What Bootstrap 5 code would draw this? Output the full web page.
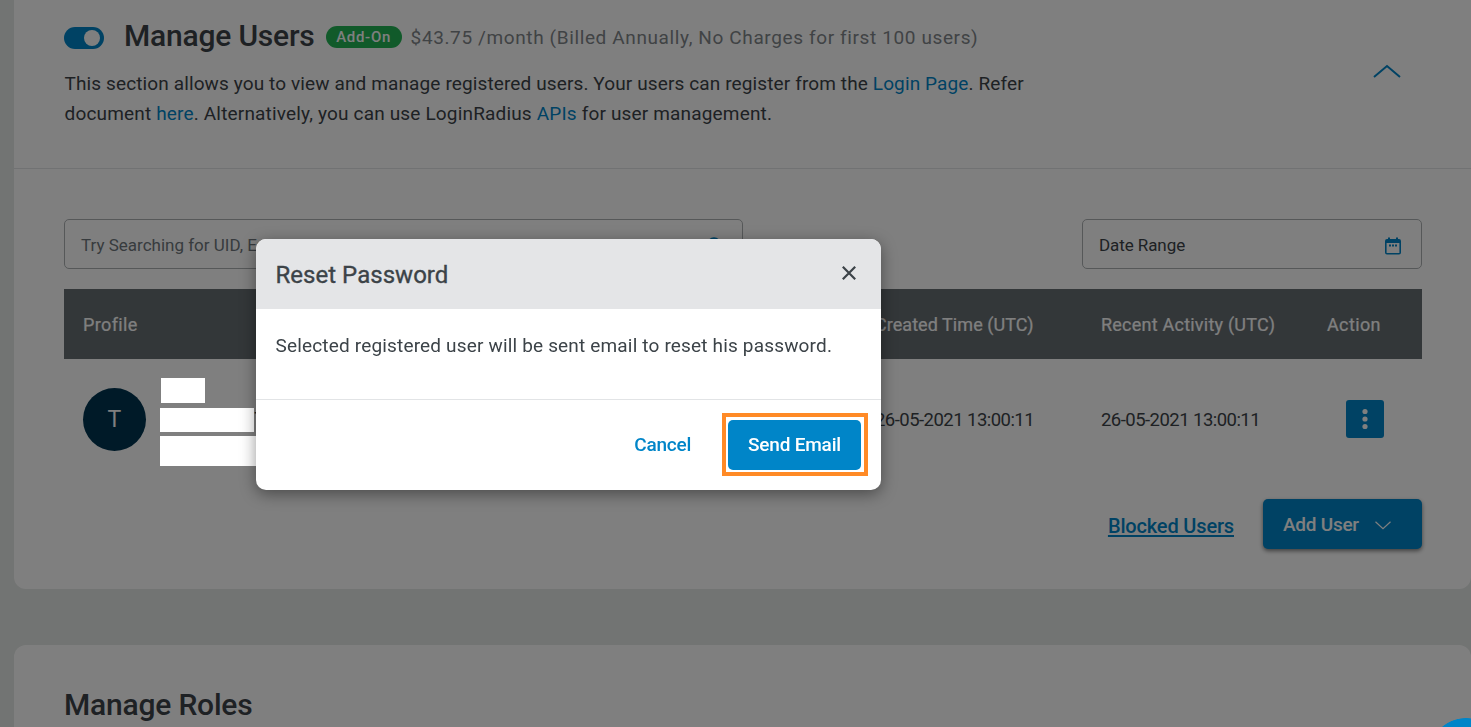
<!DOCTYPE html>
<html lang="en">
<head>
<meta charset="utf-8">
<meta name="viewport" content="width=device-width, initial-scale=1">
<title>Manage Users</title>
<link href="https://cdn.jsdelivr.net/npm/bootstrap@5.3.0/dist/css/bootstrap.min.css" rel="stylesheet">
<style>
  :root { --brand: #0085c8; --ink: #3c4348; }
  body { background: #e4e8e6; color: var(--ink); font-family: Roboto, "Liberation Sans", sans-serif; font-size: 19px; letter-spacing: .12px; height: 727px; overflow: hidden; }
  a { color: var(--brand); text-decoration: none; }
  .page { margin-left: 14px; }
  .panel { background: #fff; border-radius: 12px; }
  .panel-users { height: 589px; border-top-left-radius: 0; border-top-right-radius: 0; }
  .panel-head { height: 169px; padding: 18px 49px 0 50px; border-bottom: 1px solid #e2e4e6; }
  .panel-body { padding: 50px 49px 0 50px; }
  .panel-roles { height: 82px; margin-top: 56px; padding: 42px 50px 0; border-bottom-left-radius: 0; border-bottom-right-radius: 0; }
  .heading { font-size: 30px; line-height: 36px; font-weight: 500; letter-spacing: -.2px; margin: 0; }
  .switch { width: 40px; height: 22px; border-radius: 11px; background: var(--brand); padding: 0 4px; margin: 4px 20px 0 0; }
  .switch i { width: 16px; height: 16px; border-radius: 50%; background: #fff; }
  .addon { height: 22px; line-height: 22px; width: 76px; border-radius: 11px; background: #22b455; color: #fff; font-size: 15px; font-weight: 500; letter-spacing: .7px; margin: 1px 9px 0 11px; }
  .price { color: #81868a; letter-spacing: .62px; margin-top: 5px; }
  .intro { line-height: 30px; margin: 15px 0 0 .5px; width: 1000px; }
  .intro .second { letter-spacing: .17px; }
  .collapse-icon { margin: 46px 21px 0 0; }
  .field { height: 50px; border: 1px solid #adb1b3; border-radius: 5px; font-size: 17px; padding: 4px 20px 0 16px; letter-spacing: 0; }
  .field svg { margin-bottom: 1px; }
  .field-search { width: 679px; color: #6f777c; padding-right: 17px; }
  .field-date { width: 340px; letter-spacing: -.08px; }
  .users { margin: 20px 0 0; table-layout: fixed; width: 1358px; border-collapse: collapse; }
  .users th { height: 70px; background: #676e73; color: #fff; font-size: 18px; font-weight: 400; letter-spacing: .38px; padding: 0 0 0 19px; vertical-align: middle; -webkit-text-stroke: .2px; }
  .users th.created { letter-spacing: .05px; }
  .users th.recent { letter-spacing: .23px; }
  .users td { height: 120px; padding: 0 0 0 19px; vertical-align: middle; }
  .users td.stamp { font-size: 18.5px; letter-spacing: -.54px; padding-top: 3px; }
  .avatar { width: 63px; height: 63px; border-radius: 50%; background: #003450; color: #fff; font-size: 23px; padding-top: 2px; }
  .hidden-info { position: relative; z-index: 1051; margin-left: 14px; height: 88px; margin-top: 5px; }
  .hidden-info i { background: #fff; display: block; }
  .hidden-info .l1 { width: 44px; height: 25px; margin-left: 1px; }
  .hidden-info .l2 { width: 94px; height: 24px; margin-top: 5px; }
  .hidden-info .l3 { width: 120px; height: 30px; margin-top: 4px; }
  .tail { margin-left: -26px; line-height: 24px; }
  .dots { width: 38px; height: 38px; border-radius: 3px; background: var(--brand); margin-left: 18.500px; }
  .blocked { font-size: 20px; font-weight: 500; letter-spacing: -.16px; text-decoration: underline; text-underline-offset: 2px; text-decoration-thickness: 2px; margin: 3px 29px 0 0; }
  .add { width: 159px; height: 50px; border-radius: 5px; background: var(--brand); color: #fff; font-size: 19px; font-weight: 500; letter-spacing: -.25px; padding: 2px 0 0 20px; box-shadow: 0 2px 4px rgba(0,0,0,.5); }
  .modal-backdrop { --bs-backdrop-opacity: .5; }
  .modal .modal-dialog { width: 625px; max-width: none; margin: 239px 0 0 256px; }
  .modal-content { border: 0; border-radius: 10px; overflow: hidden; color: var(--ink); box-shadow: 0 4px 16px rgba(0,0,0,.42); }
  .modal-header { height: 70px; background: #e4e5e7; border: 0; border-radius: 0; padding: 0 24px 0 20px; }
  .modal-header svg { margin-bottom: 2px; }
  .modal-title { font-size: 24px; letter-spacing: .03px; font-weight: 400; -webkit-text-stroke: .35px; padding-top: 1px; margin-left: -.5px; }
  .modal-body { height: 90px; padding: 23px 20px 0 19.500px; line-height: 28px; letter-spacing: .17px; }
  .modal-footer { height: 91px; padding: 0 13px 2px 0; border-top: 1px solid #e2e4e6; flex-wrap: nowrap; }
  .modal-footer > * { margin: 0; }
  .modal-footer .cancel { color: var(--brand); font-weight: 500; letter-spacing: -.25px; margin-right: 31px; padding-top: 3px; }
  .ring { border: 4px solid #ff8a26; width: 146px; height: 63px; padding: 3px 3px 2px 2px; }
  .ring .send { width: 133px; height: 50px; border-radius: 5px; background: var(--brand); color: #fff; font-size: 19px; font-weight: 500; letter-spacing: -.2px; padding: 2px 0 0; }
  .help { position: fixed; width: 42px; height: 9px; right: 0; bottom: 0; background: radial-gradient(circle at 37px 37px, var(--brand) 36.500px, transparent 37.200px); z-index: 1060; }
</style>
</head>
<body>
<main class="page">
  <section class="panel panel-users">
    <header class="panel-head d-flex justify-content-between">
      <div>
        <div class="d-flex align-items-center">
          <div class="switch d-flex align-items-center justify-content-end"><i></i></div>
          <h1 class="heading">Manage Users</h1>
          <span class="addon text-center">Add-On</span>
          <span class="price">$43.75 /month (Billed Annually, No Charges for first 100 users)</span>
        </div>
        <p class="intro">This section allows you to view and manage registered users. Your users can register from the <a href="#">Login Page</a>. Refer<br><span class="second">document <a href="#">here</a>. Alternatively, you can use LoginRadius <a href="#">APIs</a> for user management.</span></p>
      </div>
      <svg class="collapse-icon" width="28" height="14" viewBox="0 0 28 14" fill="none" stroke="#0085c8" stroke-width="2"><path d="M1 13 14 2l13 11"/></svg>
    </header>
    <div class="panel-body">
      <div class="d-flex justify-content-between">
        <div class="field field-search d-flex align-items-center justify-content-between"><span>Try Searching for UID, Email</span>
          <svg width="18" height="18" viewBox="0 0 18 18" fill="none" stroke="#0085c8" stroke-width="2"><circle cx="7" cy="7" r="5.800"/><path d="m11.500 11.500 5.500 5.500"/></svg></div>
        <div class="field field-date d-flex align-items-center justify-content-between"><span>Date Range</span>
          <svg width="16" height="18" viewBox="0 0 16 18"><path fill="#0085c8" fill-rule="evenodd" d="M3 .5h2V2h6V.5h2V2h1a2 2 0 0 1 2 2v11.500a2 2 0 0 1-2 2H2a2 2 0 0 1-2-2V4a2 2 0 0 1 2-2h1zM1.600 6v9.900h12.800V6zM4 7.600h2v1.800H4zm3 0h2v1.800H7zm3 0h2v1.800h-2z"/></svg></div>
      </div>
      <table class="users">
        <colgroup><col style="width:792px"><col style="width:226px"><col style="width:226px"><col></colgroup>
        <thead><tr><th>Profile</th><th class="created">Created Time (UTC)</th><th class="recent">Recent Activity (UTC)</th><th>Action</th></tr></thead>
        <tbody><tr>
          <td><div class="d-flex align-items-center">
            <div class="avatar d-flex align-items-center justify-content-center">T</div>
            <div class="hidden-info"><i class="l1"></i><i class="l2"></i><i class="l3"></i></div>
            <span class="tail">7</span>
          </div></td>
          <td class="stamp">26-05-2021 13:00:11</td>
          <td class="stamp">26-05-2021 13:00:11</td>
          <td><div class="dots d-flex align-items-center justify-content-center"><svg width="6" height="22" viewBox="0 0 6 22" fill="#fff"><circle cx="3" cy="3.500" r="2.600"/><circle cx="3" cy="11" r="2.600"/><circle cx="3" cy="18.500" r="2.600"/></svg></div></td>
        </tr></tbody>
      </table>
      <div class="d-flex justify-content-end align-items-center" style="margin-top:20px">
        <a href="#" class="blocked">Blocked Users</a>
        <button type="button" class="btn add d-flex align-items-center border-0">Add User
          <svg width="16" height="9" viewBox="0 0 16 9" style="margin-left:16px" fill="none" stroke="#fff" stroke-width="1.200"><path d="m.5.8 7.500 7 7.500-7"/></svg></button>
      </div>
    </div>
  </section>
  <section class="panel panel-roles"><h2 class="heading">Manage Roles</h2></section>
</main>

<div class="modal-backdrop show"></div>
<div class="modal d-block overflow-hidden" tabindex="-1">
  <div class="modal-dialog">
    <div class="modal-content">
      <div class="modal-header"><h5 class="modal-title">Reset Password</h5>
        <svg width="16" height="16" viewBox="0 0 16 16" fill="none" stroke="#3c4348" stroke-width="2.200"><path d="m1.800 1.800 12.400 12.400M14.200 1.800 1.800 14.200"/></svg></div>
      <div class="modal-body">Selected registered user will be sent email to reset his password.</div>
      <div class="modal-footer"><a href="#" class="cancel">Cancel</a>
        <div class="ring"><button type="button" class="btn send border-0 d-block">Send Email</button></div></div>
    </div>
  </div>
</div>
<div class="help"></div>
<script src="https://cdn.jsdelivr.net/npm/bootstrap@5.3.0/dist/js/bootstrap.bundle.min.js"></script>
</body>
</html>
